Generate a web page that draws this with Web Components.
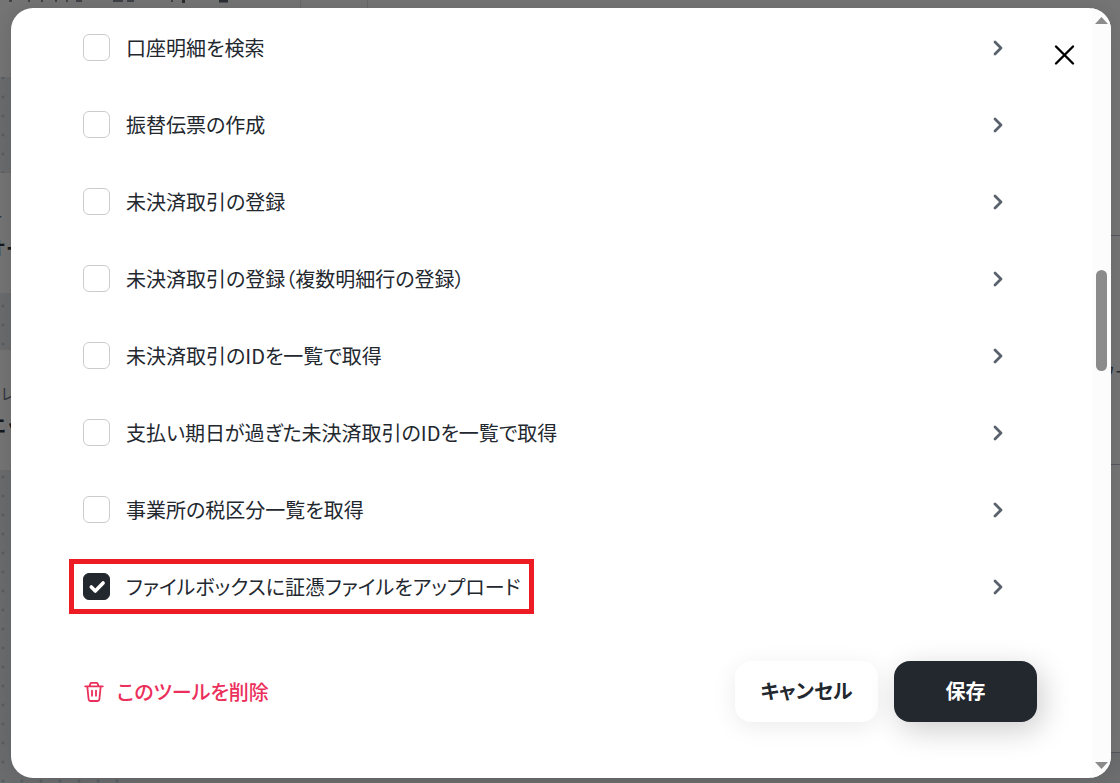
<!DOCTYPE html>
<html lang="ja">
<head>
<meta charset="utf-8">
<meta name="viewport" content="width=device-width, initial-scale=1">
<title>ツールの選択</title>
<style>
    html, body {
        height: 100%;
        margin: 0;
    }

    body {
        position: relative;
        overflow: hidden;
        background: #767676;
        color: #23282f;
        font-family: "Noto Sans CJK JP", sans-serif;
        font-size: 20px;
        line-height: 27px;
        font-feature-settings: "palt";
    }
</style>
</head>
<body>
<app-backdrop></app-backdrop>
<tool-dialog>
    <tool-row>口座明細を検索</tool-row>
    <tool-row>振替伝票の作成</tool-row>
    <tool-row>未決済取引の登録</tool-row>
    <tool-row>未決済取引の登録（複数明細行の登録）</tool-row>
    <tool-row>未決済取引のIDを一覧で取得</tool-row>
    <tool-row>支払い期日が過ぎた未決済取引のIDを一覧で取得</tool-row>
    <tool-row>事業所の税区分一覧を取得</tool-row>
    <tool-row checked marked>ファイルボックスに証憑ファイルをアップロード</tool-row>
    <delete-link slot="footer">このツールを削除</delete-link>
    <dialog-button slot="footer">キャンセル</dialog-button>
    <dialog-button slot="footer" kind="primary">保存</dialog-button>
</tool-dialog>

<script>
class AppBackdrop extends HTMLElement {

    constructor() {
        super()
        this.attachShadow({ mode: 'open' })
    }

    connectedCallback() {
        this.shadowRoot.innerHTML = `
            <style>
                :host {
                    position: absolute;
                    inset: 0;
                    display: flex;
                    overflow: hidden;
                    background: linear-gradient(#767676 50%, #6c6c6d 50%);
                    font-feature-settings: normal;
                }
                .canvas {
                    display: flex;
                    flex-direction: column;
                    flex: none;
                    width: 134px;
                    background:
                        radial-gradient(circle at 3px 2px, #585e63 1px, transparent 2px) 0 76px / 19px 19px,
                        #6b6c6e;
                }
                .node {
                    box-sizing: border-box;
                    height: 120px;
                    padding-top: 30px;
                    overflow: hidden;
                    background: #757575;
                    font-size: 16px;
                    white-space: nowrap;
                    color: #34393f;
                }
                .node b {
                    display: block;
                    margin-top: 4px;
                    text-indent: -13px;
                    font-size: 19px;
                    color: #14181c;
                }
                .node.title {
                    height: 77px;
                    padding: 0;
                }
                .node + .node {
                    margin-top: 96px;
                }
                .node + .node + .node {
                    margin-top: 57px;
                }
                .cut {
                    text-indent: -13px;
                }
                .header {
                    flex: 1;
                }
                .header svg {
                    display: block;
                    margin-left: -134px;
                }
                .panel {
                    width: 40px;
                    background: #6d6e70;
                }
                .panel div {
                    box-sizing: border-box;
                    height: 229px;
                    border-bottom: 1px solid #55595f;
                    background: #767676;
                    font-size: 16px;
                }
                .panel div:first-child {
                    height: 236px;
                }
                .panel div:last-child {
                    height: 288px;
                }
                .panel .port {
                    padding: 122px 0 0 19px;
                    overflow: hidden;
                    white-space: nowrap;
                }
            </style>
            <div class="canvas">
                <div class="node title"></div>
                <div class="node"><div class="cut">ー</div><b>オー</b></div>
                <div class="node">レ<b>エッ</b></div>
            </div>
            <div class="header">
                <svg width="380" height="8" viewBox="0 0 380 8" fill="none">
                    <path d="M9 1h3M28 1h2M41 1h2M55 1h2M66 1h2M76 1h6M113 1h10M127 1h7M171 1h2" stroke="#3f4347" stroke-width="2"/>
                    <path d="M183.500 0v3M219 1h9" stroke="#2b2f34" stroke-width="3"/>
                    <path d="M300.500 0v8M367.500 0v8" stroke="#6a6a6b"/>
                </svg>
            </div>
            <div class="panel">
                <div></div>
                <div class="port">ワー</div>
                <div></div>
            </div>
        `
    }
}

class ToolRow extends HTMLElement {

    constructor() {
        super()
        this.attachShadow({ mode: 'open' })
    }

    connectedCallback() {
        const checked = this.hasAttribute('checked') ? 'checked' : ''
        this.shadowRoot.innerHTML = `
            <style>
                :host {
                    display: flex;
                    align-items: center;
                    justify-content: space-between;
                    height: 77px;
                }
                label {
                    display: flex;
                    align-items: center;
                    gap: 16px;
                    padding: 9px;
                    margin-left: -14px;
                    border: 5px solid transparent;
                    cursor: pointer;
                }
                :host([marked]) label {
                    border-color: #ed1c24;
                }
                .box {
                    display: grid;
                    width: 27px;
                    height: 27px;
                }
                input, .box svg {
                    grid-area: 1 / 1;
                    width: 27px;
                    height: 27px;
                }
                input {
                    appearance: none;
                    box-sizing: border-box;
                    margin: 0;
                    border: 1px solid #ccc;
                    border-radius: 6px;
                    background: #fff;
                }
                input:checked {
                    border-color: #23282f;
                    background: #23282f;
                }
                .box svg {
                    visibility: hidden;
                    pointer-events: none;
                }
                input:checked + svg {
                    visibility: visible;
                }
                button {
                    display: flex;
                    padding: 0;
                    border: 0;
                    background: none;
                    color: #59616c;
                }
            </style>
            <label>
                <span class="box">
                    <input type="checkbox" ${checked}>
                    <svg viewBox="0 0 27 27" fill="none" stroke="#fff" stroke-width="3.6" stroke-linecap="round" stroke-linejoin="round"><path d="M8.300 14l4 4 7.800-8"/></svg>
                </span>
                <slot></slot>
            </label>
            <button aria-label="開く">
                <svg width="20" height="20" viewBox="0 0 20 20" fill="none" stroke="currentColor" stroke-width="2.8" stroke-linecap="round" stroke-linejoin="round"><path d="M7 4l6 6-6 6"/></svg>
            </button>
        `
    }
}

class DeleteLink extends HTMLElement {

    constructor() {
        super()
        this.attachShadow({ mode: 'open' })
    }

    connectedCallback() {
        this.shadowRoot.innerHTML = `
            <style>
                :host {
                    display: block;
                    margin-right: auto;
                }
                button {
                    display: flex;
                    align-items: center;
                    gap: 12px;
                    padding: 0;
                    border: 0;
                    background: none;
                    color: #eb2f5b;
                    font: inherit;
                    font-weight: 500;
                    font-feature-settings: inherit;
                }
            </style>
            <button>
                <svg width="22" height="22" viewBox="0 0 22 22" fill="none" stroke="currentColor" stroke-width="1.8" stroke-linecap="round" stroke-linejoin="round">
                    <path d="M2.200 5.300h17.600M6.500 5l1-2.600q.2-.6.8-.6h5.400q.6 0 .8.6l1 2.600M4.300 5.500l1.300 12.700q.2 1.800 1.800 1.800h7.200q1.600 0 1.800-1.800l1.300-12.700M9 9.600v5.200M13 9.600v5.200"/>
                </svg>
                <slot></slot>
            </button>
        `
    }
}

class DialogButton extends HTMLElement {

    constructor() {
        super()
        this.attachShadow({ mode: 'open' })
    }

    connectedCallback() {
        this.shadowRoot.innerHTML = `
            <style>
                :host {
                    display: block;
                }
                button {
                    width: 143px;
                    height: 61px;
                    padding: 0 0 2px;
                    border: 0;
                    border-radius: 16px;
                    background: #fff;
                    box-shadow: 0 5px 24px rgba(0, 0, 0, 0.08);
                    color: #23282f;
                    font: inherit;
                    font-weight: 700;
                    font-feature-settings: inherit;
                }
                :host([kind=primary]) button {
                    background: #23282f;
                    box-shadow: 5px 8px 30px rgba(0, 0, 0, 0.2);
                    color: #fff;
                }
            </style>
            <button><slot></slot></button>
        `
    }
}

class ToolDialog extends HTMLElement {

    constructor() {
        super()
        this.attachShadow({ mode: 'open' })
    }

    connectedCallback() {
        this.shadowRoot.innerHTML = `
            <style>
                :host {
                    position: absolute;
                    inset: 8px 9px 5px 11px;
                    display: flex;
                    overflow: hidden;
                    border-radius: 22px;
                    background: #fff;
                    box-shadow: 0 0 24px rgba(0, 0, 0, 0.12);
                }
                .content {
                    flex: 1;
                    display: flex;
                    flex-direction: column;
                    justify-content: space-between;
                    padding: 1px 55px 56px 72px;
                }
                .list {
                    padding-right: 29px;
                }
                footer {
                    display: flex;
                    align-items: center;
                    gap: 16px;
                }
                .close {
                    position: absolute;
                    top: 35px;
                    right: 35px;
                    display: flex;
                    padding: 0;
                    border: 0;
                    background: none;
                    color: #000;
                }
                .scrollbar {
                    display: flex;
                    flex-direction: column;
                    align-items: center;
                    width: 19px;
                    padding: 8px 0;
                    box-sizing: border-box;
                    background: #fcfcfc;
                }
                .track {
                    flex: 1;
                    display: flex;
                    flex-direction: column;
                }
                .track::before {
                    content: "";
                    flex: 246;
                }
                .track::after {
                    content: "";
                    flex: 391;
                }
                .thumb {
                    width: 11px;
                    height: 101px;
                    border-radius: 6px;
                    background: #8b8b8b;
                }
            </style>
            <div class="content">
                <div class="list"><slot></slot></div>
                <footer><slot name="footer"></slot></footer>
            </div>
            <button class="close" aria-label="閉じる">
                <svg width="24" height="24" viewBox="0 0 24 24" fill="none" stroke="currentColor" stroke-width="2.4" stroke-linecap="round"><path d="M4 3.500l17 17M21 3.500l-17 17"/></svg>
            </button>
            <div class="scrollbar">
                <svg width="13" height="8" viewBox="0 0 13 8"><path d="M0 8L6.500 1 13 8z" fill="#8b8b8b"/></svg>
                <div class="track"><div class="thumb"></div></div>
                <svg width="13" height="8" viewBox="0 0 13 8"><path d="M0 0h13L6.500 7z" fill="#8b8b8b"/></svg>
            </div>
        `
    }
}

window.customElements.define('app-backdrop', AppBackdrop)
window.customElements.define('tool-row', ToolRow)
window.customElements.define('delete-link', DeleteLink)
window.customElements.define('dialog-button', DialogButton)
window.customElements.define('tool-dialog', ToolDialog)
</script>
</body>
</html>
